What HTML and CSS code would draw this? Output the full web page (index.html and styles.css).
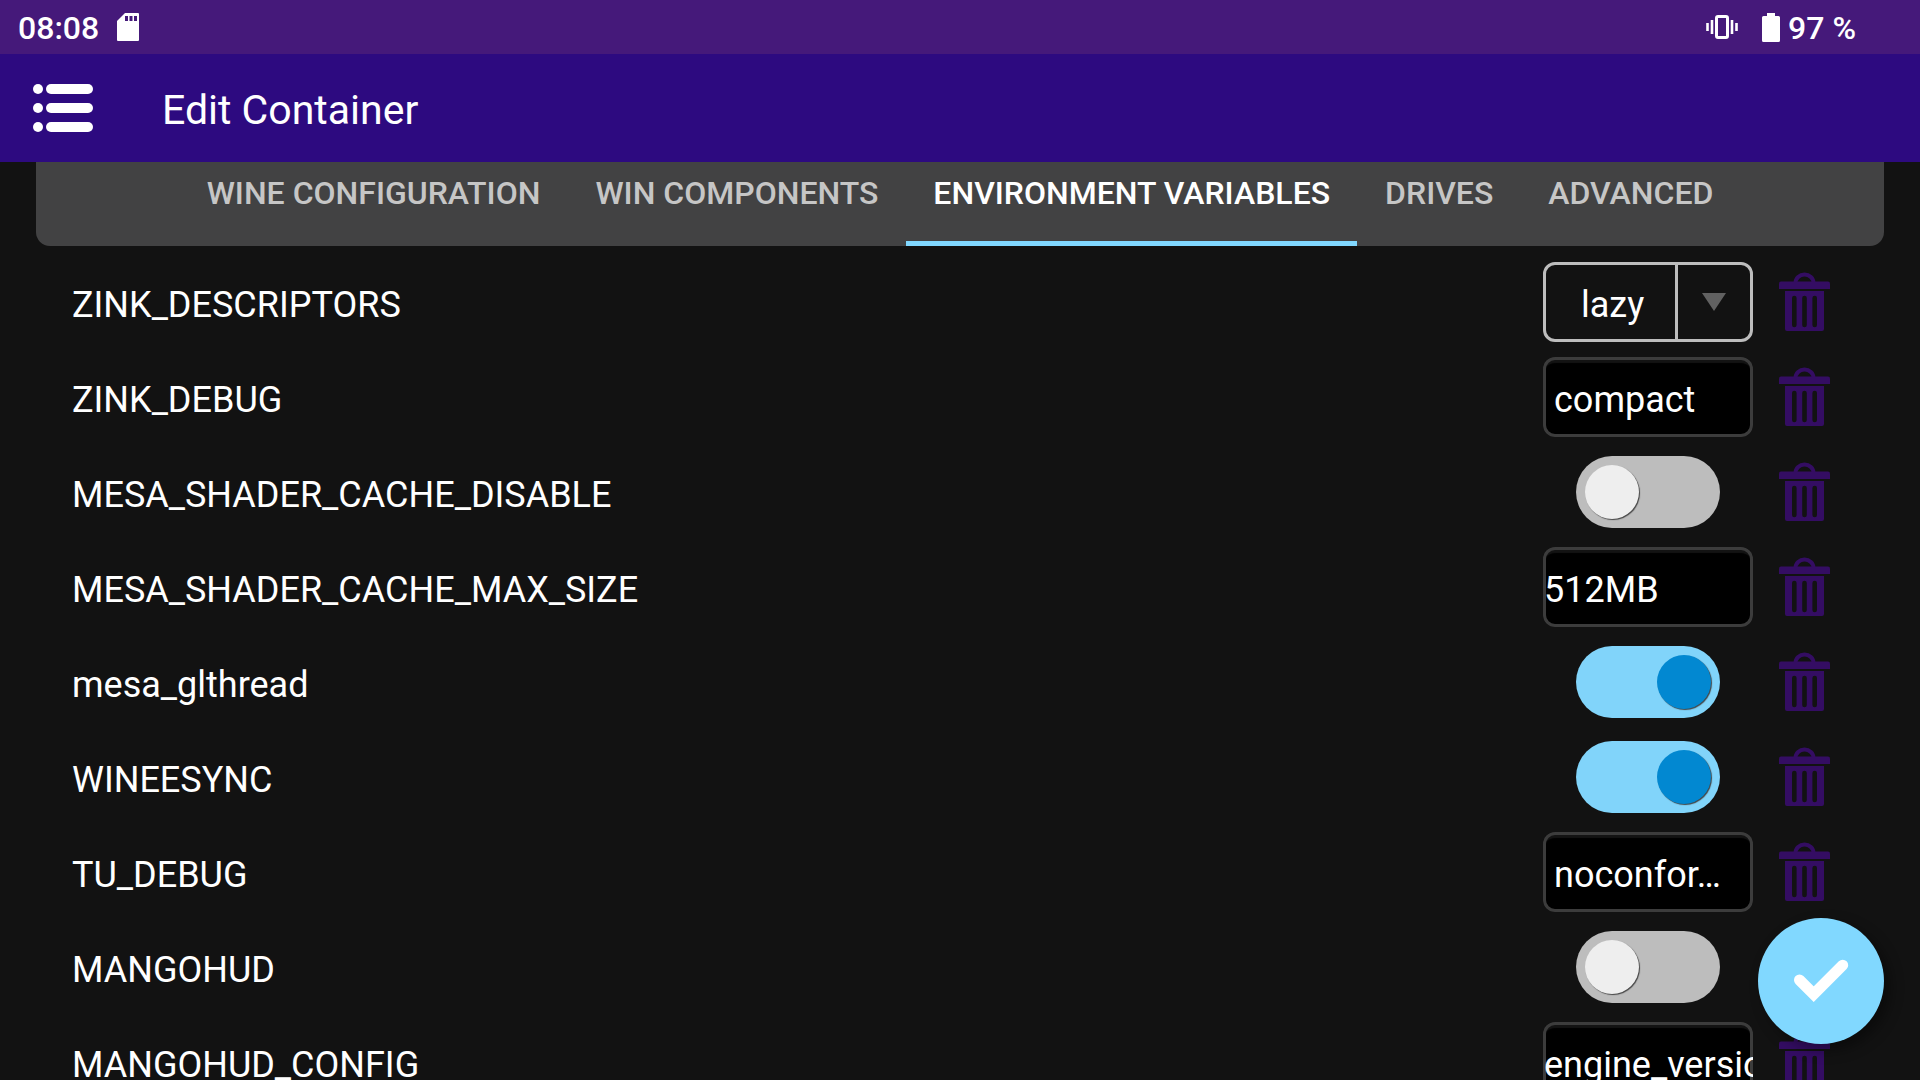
FILE: index.html
```html
<!DOCTYPE html>
<html lang="en">
<head>
<meta charset="utf-8">
<meta name="viewport" content="width=device-width, initial-scale=1">
<title>Edit Container</title>
<link rel="stylesheet" href="styles.css">
</head>
<body>
<svg class="sprite" aria-hidden="true">
  <symbol id="trash" viewBox="0 0 51 60">
    <path d="M16.500 11A9 8.500 0 0 1 34.500 11" fill="none" stroke="currentColor" stroke-width="4"/>
    <path d="M2 9.500H49Q51 9.500 51 11.500V17H0V11.500Q0 9.500 2 9.500Z" fill="currentColor"/>
    <path fill="currentColor" fill-rule="evenodd" d="M6 19H45V57Q45 59 43 59H8Q6 59 6 57ZM13 26V53A2.300 2.300 0 0 0 17.600 53V26A2.300 2.300 0 0 0 13 26ZM23.200 26V53A2.300 2.300 0 0 0 27.800 53V26A2.300 2.300 0 0 0 23.200 26ZM33.400 26V53A2.300 2.300 0 0 0 38 53V26A2.300 2.300 0 0 0 33.400 26Z"/>
  </symbol>
</svg>
<div class="screen">
  <div class="status-bar">
    <span class="clock">08:08</span>
    <svg class="sd-card" viewBox="0 0 22 28" width="22" height="28" aria-hidden="true"><path fill="#fff" fill-rule="evenodd" d="M8 0H21Q22 0 22 1V27Q22 28 21 28H1Q0 28 0 27V8ZM8 3V8H11V3ZM12.500 3V8H15.500V3ZM17 3V8H20V3Z"/></svg>
    <svg class="vibrate" viewBox="0 0 32 24" width="32" height="24" aria-hidden="true"><rect x="10.500" y="1.500" width="11" height="21" rx="1.500" fill="none" stroke="#fff" stroke-width="3"/><path d="M6 5V19M1.500 8V16M26 5V19M30.500 8V16" stroke="#fff" stroke-width="2.600"/></svg>
    <svg class="battery" viewBox="0 0 18 29" width="18" height="29" aria-hidden="true"><path fill="#fff" d="M5 0H13V3H16.500Q18 3 18 4.500V27.500Q18 29 16.500 29H1.500Q0 29 0 27.500V4.500Q0 3 1.500 3H5Z"/></svg>
    <span class="level">97 %</span>
  </div>
  <header class="app-bar">
    <button class="menu" type="button" aria-label="Menu">
      <svg viewBox="0 0 60 48" width="60" height="48" aria-hidden="true"><g fill="#fff"><circle cx="5" cy="5" r="5"/><circle cx="5" cy="24" r="5"/><circle cx="5" cy="43" r="5"/><rect x="13" width="47" height="10" rx="5"/><rect x="13" y="19" width="47" height="10" rx="5"/><rect x="13" y="38" width="47" height="10" rx="5"/></g></svg>
    </button>
    <h1 class="title">Edit Container</h1>
  </header>
  <nav class="tabs">
    <button class="tab" type="button">WINE CONFIGURATION</button>
    <button class="tab" type="button">WIN COMPONENTS</button>
    <button class="tab tab-active" type="button">ENVIRONMENT VARIABLES</button>
    <button class="tab" type="button">DRIVES</button>
    <button class="tab" type="button">ADVANCED</button>
  </nav>
  <main class="variables">
    <div class="row">
      <label class="name" for="zink-descriptors">ZINK_DESCRIPTORS</label>
      <div class="control">
        <div class="dropdown">
          <select class="choice" id="zink-descriptors"><option>lazy</option></select>
          <svg class="arrow" viewBox="0 0 24 18" width="24" height="18" aria-hidden="true"><path d="M0 0H24L12 18Z" fill="#616161"/></svg>
        </div>
      </div>
      <button class="remove" type="button" aria-label="Remove ZINK_DESCRIPTORS"><svg width="51" height="60"><use href="#trash"/></svg></button>
    </div>
    <div class="row">
      <label class="name" for="zink-debug">ZINK_DEBUG</label>
      <div class="control"><button class="field picker" id="zink-debug" type="button">compact</button></div>
      <button class="remove" type="button" aria-label="Remove ZINK_DEBUG"><svg width="51" height="60"><use href="#trash"/></svg></button>
    </div>
    <div class="row">
      <label class="name" for="cache-disable">MESA_SHADER_CACHE_DISABLE</label>
      <div class="control"><input class="switch" id="cache-disable" type="checkbox"></div>
      <button class="remove" type="button" aria-label="Remove MESA_SHADER_CACHE_DISABLE"><svg width="51" height="60"><use href="#trash"/></svg></button>
    </div>
    <div class="row">
      <label class="name" for="cache-size">MESA_SHADER_CACHE_MAX_SIZE</label>
      <div class="control"><input class="field" id="cache-size" type="text" value="512MB"></div>
      <button class="remove" type="button" aria-label="Remove MESA_SHADER_CACHE_MAX_SIZE"><svg width="51" height="60"><use href="#trash"/></svg></button>
    </div>
    <div class="row">
      <label class="name" for="glthread">mesa_glthread</label>
      <div class="control"><input class="switch" id="glthread" type="checkbox" checked></div>
      <button class="remove" type="button" aria-label="Remove mesa_glthread"><svg width="51" height="60"><use href="#trash"/></svg></button>
    </div>
    <div class="row">
      <label class="name" for="esync">WINEESYNC</label>
      <div class="control"><input class="switch" id="esync" type="checkbox" checked></div>
      <button class="remove" type="button" aria-label="Remove WINEESYNC"><svg width="51" height="60"><use href="#trash"/></svg></button>
    </div>
    <div class="row">
      <label class="name" for="tu-debug">TU_DEBUG</label>
      <div class="control"><button class="field picker" id="tu-debug" type="button">noconfor…</button></div>
      <button class="remove" type="button" aria-label="Remove TU_DEBUG"><svg width="51" height="60"><use href="#trash"/></svg></button>
    </div>
    <div class="row">
      <label class="name" for="mangohud">MANGOHUD</label>
      <div class="control"><input class="switch" id="mangohud" type="checkbox"></div>
      <button class="remove" type="button" aria-label="Remove MANGOHUD"><svg width="51" height="60"><use href="#trash"/></svg></button>
    </div>
    <div class="row">
      <label class="name" for="mangohud-config">MANGOHUD_CONFIG</label>
      <div class="control"><input class="field" id="mangohud-config" type="text" value="engine_version"></div>
      <button class="remove" type="button" aria-label="Remove MANGOHUD_CONFIG"><svg width="51" height="60"><use href="#trash"/></svg></button>
    </div>
  </main>
  <button class="confirm" type="button" aria-label="Save">
    <svg viewBox="0 0 126 126" width="126" height="126" aria-hidden="true"><path d="M41.500 62L55.700 76.200L84.700 47.200" fill="none" stroke="#fff" stroke-width="11" stroke-linecap="round"/></svg>
  </button>
</div>
</body>
</html>
```
FILE: styles.css
```css
* {
  box-sizing: border-box;
}

body {
  margin: 0;
  background: #121212;
  color: #fff;
  font-family: Roboto, "Liberation Sans", sans-serif;
}

button,
input,
select {
  margin: 0;
  padding: 0;
  border: 0;
  background: none;
  color: inherit;
  font: inherit;
}

svg {
  display: block;
}

.sprite {
  display: none;
}

.screen {
  display: flex;
  flex-direction: column;
  height: 100vh;
  overflow: hidden;
}

.status-bar {
  display: flex;
  align-items: center;
  flex: none;
  height: 54px;
  padding: 0 64px 0 18px;
  background: #45197a;
  font-size: 32px;
  font-weight: 500;
  line-height: 52px;
}

.clock,
.level {
  padding-top: 2px;
}

.clock {
  margin-right: 18px;
}

.vibrate {
  margin-left: auto;
  margin-right: 24px;
}

.battery {
  margin-right: 8px;
}

.app-bar {
  display: flex;
  align-items: center;
  flex: none;
  gap: 69px;
  height: 108px;
  padding: 0 33px;
  background: #2d0a80;
}

.title {
  margin: 0;
  padding-top: 4px;
  font-size: 41px;
  font-weight: 400;
  line-height: 48px;
}

.tabs {
  display: flex;
  justify-content: center;
  flex: none;
  gap: 1px;
  height: 84px;
  margin: 0 36px;
  border-radius: 0 0 14px 14px;
  background: #424243;
}

.tab {
  padding: 0 27px 18px;
  border-bottom: 5px solid transparent;
  color: #c6c6c6;
  font-size: 32px;
  font-weight: 500;
}

.tab-active {
  border-color: #81d8ff;
  color: #fff;
}

.variables {
  flex: 1;
  min-height: 0;
  padding: 8px 90px 0 72px;
  overflow: hidden;
  font-size: 36px;
}

.row {
  display: flex;
  align-items: center;
  gap: 26px;
  padding: 8px 0 7px;
}

.name {
  flex: 1;
  padding-top: 6px;
}

.control {
  display: flex;
  align-items: center;
  justify-content: center;
  width: 210px;
  height: 80px;
}

.dropdown {
  display: grid;
  grid-template-columns: 1fr 72px;
  align-items: center;
  width: 100%;
  height: 100%;
  border: 3px solid #bdbdbd;
  border-radius: 12px;
}

.choice {
  grid-area: 1 / 1 / 2 / 3;
  height: 100%;
  padding: 6px 0 0 35px;
  appearance: none;
  background: linear-gradient(#bdbdbd, #bdbdbd) right 72px top / 3px 100% no-repeat;
}

.choice option {
  background: #121212;
}

.arrow {
  grid-area: 1 / 2;
  justify-self: center;
  pointer-events: none;
}

.field {
  width: 100%;
  height: 100%;
  padding: 6px 0 0 1px;
  border-radius: 12px;
  background: #000;
  box-shadow: inset 0 0 0 3px #3c3c3c, inset 0 6px 1px #131313;
}

.picker {
  padding-left: 11px;
  text-align: left;
}

.switch {
  display: block;
  width: 144px;
  height: 72px;
  padding: 9px;
  appearance: none;
  border-radius: 36px;
  background: #bdbdbd;
}

.switch::before {
  content: "";
  display: block;
  width: 54px;
  height: 54px;
  border-radius: 50%;
  background: #eee;
  box-shadow: 1px 1px 1px #444;
}

.switch:checked {
  background: #81d4fa;
}

.switch:checked::before {
  margin-left: auto;
  background: #0288d1;
}

.remove {
  color: #340d63;
}

.confirm {
  position: fixed;
  right: 36px;
  bottom: 36px;
  border-radius: 50%;
  background: #81d8ff;
  box-shadow: 6px 6px 14px rgba(0, 0, 0, 0.4);
}
```
